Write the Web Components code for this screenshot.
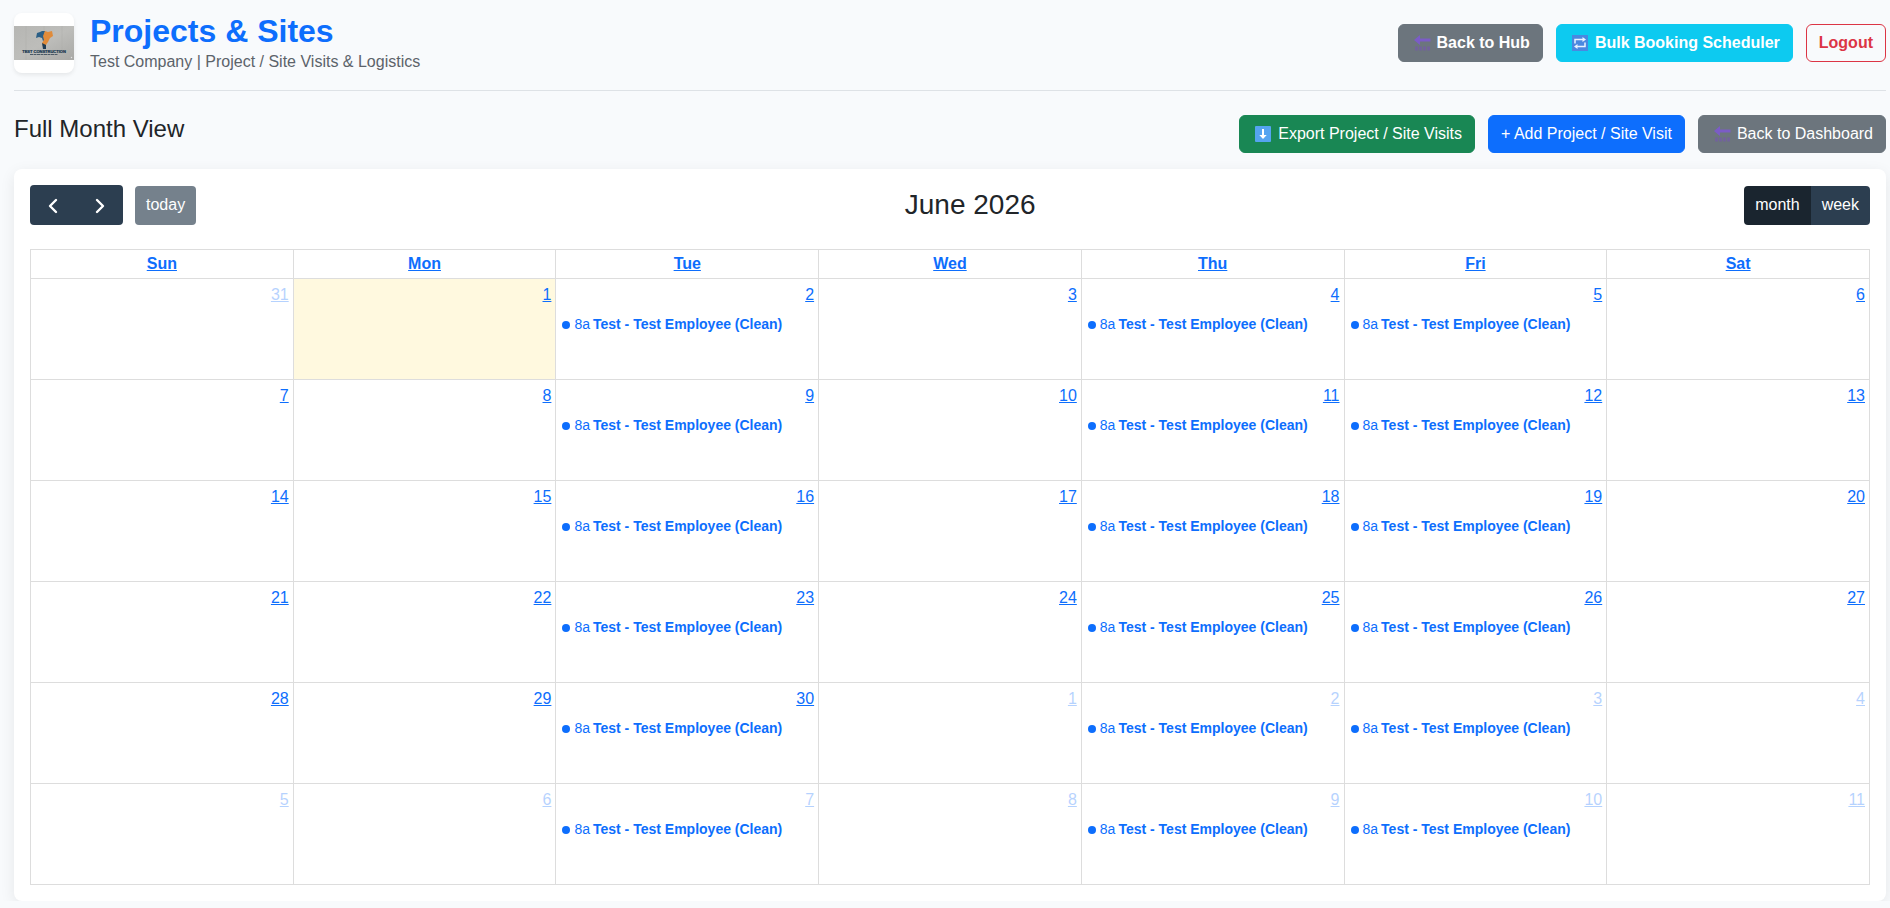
<!DOCTYPE html>
<html lang="en">
<head>
<meta charset="utf-8">
<meta name="viewport" content="width=device-width, initial-scale=1">
<title>Projects &amp; Sites</title>
<style>
  body {
    margin: 0;
    padding: 12px 4px 0 14px;
    background: #f8fafc;
    color: #212529;
    font: 16px/24px "Liberation Sans", Arial, sans-serif;
  }
</style>
</head>
<body>
<site-header heading="Projects &amp; Sites" subheading="Test Company | Project / Site Visits &amp; Logistics">
  <action-button tone="secondary" icon="back" strong>Back to Hub</action-button>
  <action-button tone="info" icon="repeat" strong>Bulk Booking Scheduler</action-button>
  <action-button tone="danger" strong>Logout</action-button>
</site-header>
<section-bar heading="Full Month View">
  <action-button tone="success" icon="down">Export Project / Site Visits</action-button>
  <action-button tone="primary">+ Add Project / Site Visit</action-button>
  <action-button tone="secondary" icon="back">Back to Dashboard</action-button>
</section-bar>
<month-calendar year="2026" month="6" today="2026-06-01"></month-calendar>

<script>
const define = (name, html, setup) => {
  const template = document.createElement('template');
  template.innerHTML = html;
  customElements.define(name, class extends HTMLElement {
    constructor() {
      super();
      this.attachShadow({ mode: 'open' }).append(template.content.cloneNode(true));
    }
    connectedCallback() {
      if (setup && !this.ready) { this.ready = true; setup(this, this.shadowRoot); }
    }
  });
};

const ICONS = {
  back: '<path d="M3 6 9 1v3.600h10.500v3H9V11z" fill="#7b5cc6"/><path d="M4 12.500h3v4H4zM8 12.500h3v4H8zM12 12.500h3v4h-3zM16 12.500h3v4h-3z" fill="#71639a"/>',
  repeat: '<rect x="3" y="1" width="16" height="16" fill="#4a88e0"/><path d="M6 9.500V5.500h8.500M16 8.500v4H7.500" fill="none" stroke="#eaf3ff" stroke-width="1.500"/><path d="M13.500 3 17 5.500 13.500 8zM8.500 10 5 12.500 8.500 15z" fill="#eaf3ff"/>',
  down: '<rect x="3" y="1" width="16" height="16" rx="1" fill="#55a4f0"/><path d="M10 4h2v6h2.700L11 14l-3.700-4H10z" fill="#fff"/>'
};

define('action-button', `
  <style>
    :host { display: block; --bg: #6c757d; --fg: #fff; --edge: var(--bg); }
    :host([tone=info]) { --bg: #0dcaf0; }
    :host([tone=success]) { --bg: #198754; }
    :host([tone=primary]) { --bg: #0d6efd; }
    :host([tone=danger]) { --bg: transparent; --fg: #dc3545; --edge: #dc3545; }
    :host([strong]) button { font-weight: 700; }
    button {
      display: flex; align-items: center; gap: 4px;
      height: 38px; padding: 0 12px; margin: 0;
      border: 1px solid var(--edge); border-radius: 6px;
      background: var(--bg); color: var(--fg);
      font: inherit; white-space: nowrap; cursor: pointer;
    }
    svg { display: block; width: 22px; height: 18px; }
    svg:empty { display: none; }
  </style>
  <button type="button"><svg viewBox="0 0 22 18" aria-hidden="true"></svg><slot></slot></button>`,
  (host, root) => {
    root.querySelector('svg').innerHTML = ICONS[host.getAttribute('icon')] || '';
  });

define('company-logo', `
  <style>
    :host { display: block; width: 60px; height: 60px; border-radius: 8px; background: #fff; box-shadow: 0 2px 4px rgba(0,0,0,.08); overflow: hidden; }
    svg { display: block; width: 100%; height: 100%; }
  </style>
  <svg viewBox="0 0 60 60" role="img" aria-label="Company logo">
    <defs><linearGradient id="wall" x2="1" y2="1"><stop stop-color="#b6b6b3"/><stop offset=".5" stop-color="#bdbdba"/><stop offset="1" stop-color="#a9a9a6"/></linearGradient></defs>
    <rect y="13" width="60" height="34" fill="url(#wall)"/>
    <path d="M12 13v34M30 13v34M48 13v34" stroke="#aeaeab" stroke-width=".5"/>
    <path d="M23 20l3-1 2-1h3l-1 5 1 4-2 1-1-3-3-1-3 1z" fill="#2b5f86"/>
    <path d="M31 18l3 1 4-1 1 5-3 2-2 4-2 3-3 1-1-3 2-3-1-4z" fill="#e08b3a"/>
    <path d="M28 30l4 2v4h-3z" fill="#1e3c55"/>
    <text x="30" y="40" text-anchor="middle" font-size="4" font-weight="700" fill="#14334d" stroke="#14334d" stroke-width=".2">TEST CONSTRUCTION</text>
    <path d="M16 41.500h28" stroke="#4c5a66" stroke-width="1" stroke-dasharray="3 .500"/>
    <circle cx="57.500" cy="44.500" r=".7" fill="#e4e4e4"/>
  </svg>`);

define('site-header', `
  <style>
    :host { display: block; }
    header { display: flex; align-items: center; gap: 16px; padding-bottom: 16px; margin-bottom: 24px; border-bottom: 1px solid #dee2e6; }
    h1 { margin: 0; font-size: 32px; line-height: 38px; font-weight: 700; color: #0d6efd; }
    p { margin: 0; color: #5c636a; }
    .titles { flex: 1; }
    .actions { display: flex; gap: 13px; }
  </style>
  <header>
    <company-logo></company-logo>
    <div class="titles"><h1></h1><p></p></div>
    <div class="actions"><slot></slot></div>
  </header>`,
  (host, root) => {
    root.querySelector('h1').textContent = host.getAttribute('heading');
    root.querySelector('p').textContent = host.getAttribute('subheading');
  });

define('section-bar', `
  <style>
    :host { display: flex; justify-content: space-between; align-items: flex-start; margin-bottom: 16px; }
    h2 { margin: 0; font-size: 24px; line-height: 28px; font-weight: 400; }
    div { display: flex; gap: 13px; }
  </style>
  <h2></h2><div><slot></slot></div>`,
  (host, root) => { root.querySelector('h2').textContent = host.getAttribute('heading'); });

define('calendar-toolbar', `
  <style>
    :host { display: flex; justify-content: space-between; align-items: center; margin-bottom: 24px; }
    .start, .end, .group { display: flex; align-items: center; }
    .start { gap: 12px; }
    h2 { margin: 0; font-size: 28px; line-height: 34px; font-weight: 400; }
    button { height: 39px; padding: 0 11px; border: 0; border-radius: 4px; background: #2c3e50; color: #fff; font: inherit; cursor: pointer; }
    .nav { width: 93px; }
    .nav button { flex: 1; display: flex; align-items: center; justify-content: center; height: 40px; }
    .group button:first-child { border-radius: 4px 0 0 4px; }
    .group button:last-child { border-radius: 0 4px 4px 0; }
    button[aria-pressed=true] { background: #1a252f; }
    button:disabled { opacity: .65; cursor: default; }
    svg { display: block; width: 24px; height: 24px; fill: none; stroke: #fff; stroke-width: 2.400; stroke-linecap: round; stroke-linejoin: round; }
  </style>
  <div class="start">
    <div class="group nav">
      <button type="button" aria-label="Previous month"><svg viewBox="0 0 24 24"><path d="M15 7l-6 6 6 6"/></svg></button>
      <button type="button" aria-label="Next month"><svg viewBox="0 0 24 24"><path d="M9 7l6 6-6 6"/></svg></button>
    </div>
    <button type="button" disabled>today</button>
  </div>
  <h2><slot></slot></h2>
  <div class="end"><div class="group">
    <button type="button" aria-pressed="true">month</button>
    <button type="button" aria-pressed="false">week</button>
  </div></div>`);

define('calendar-event', `
  <style>
    :host { display: block; margin: 7px 2px 0; }
    a { display: flex; align-items: center; font-size: 14px; line-height: 21px; color: #0d6efd; text-decoration: none; white-space: nowrap; overflow: hidden; }
    i { flex: none; width: 8px; height: 8px; margin: 0 4px; border-radius: 50%; background: #0d6efd; }
    time { margin-right: 3px; }
    b { font-weight: 700; }
  </style>
  <a href="#"><i></i><time datetime="08:00">8a</time><b><slot></slot></b></a>`);

define('month-calendar', `
  <style>
    :host { display: block; padding: 16px; border-radius: 8px; background: #fff; box-shadow: 0 4px 15px rgba(0,0,0,.08); }
    table { width: 100%; table-layout: fixed; border-collapse: collapse; }
    th, td { border: 1px solid #ddd; padding: 0; vertical-align: top; }
    th { height: 28px; vertical-align: middle; }
    td { height: 100px; }
    a { color: #0d6efd; }
    .day { display: block; padding: 4px 4px 0; text-align: right; }
    .other .day { opacity: .3; }
    .today { background: #fff9df; }
  </style>
  <calendar-toolbar></calendar-toolbar>
  <table><thead><tr></tr></thead><tbody></tbody></table>`,
  (host, root) => {
    const year = +host.getAttribute('year'), month = +host.getAttribute('month') - 1;
    const first = new Date(Date.UTC(year, month, 1));
    root.querySelector('calendar-toolbar').textContent =
      first.toLocaleDateString('en-US', { month: 'long', year: 'numeric', timeZone: 'UTC' });
    root.querySelector('thead tr').innerHTML = ['Sun', 'Mon', 'Tue', 'Wed', 'Thu', 'Fri', 'Sat']
      .map(d => `<th scope="col"><a href="#">${d}</a></th>`).join('');
    const visitDays = [2, 4, 5];
    let rows = '';
    for (let week = 0; week < 6; week++) {
      rows += '<tr>';
      for (let d = 0; d < 7; d++) {
        const date = new Date(Date.UTC(year, month, 1 - first.getUTCDay() + week * 7 + d));
        const cls = [date.getUTCMonth() !== month && 'other',
          date.toISOString().slice(0, 10) === host.getAttribute('today') && 'today'].filter(Boolean).join(' ');
        rows += `<td class="${cls}"><div class="day"><a href="#">${date.getUTCDate()}</a></div>` +
          (visitDays.includes(d) ? '<calendar-event>Test - Test Employee (Clean)</calendar-event>' : '') + '</td>';
      }
      rows += '</tr>';
    }
    root.querySelector('tbody').innerHTML = rows;
  });
</script>
</body>
</html>
